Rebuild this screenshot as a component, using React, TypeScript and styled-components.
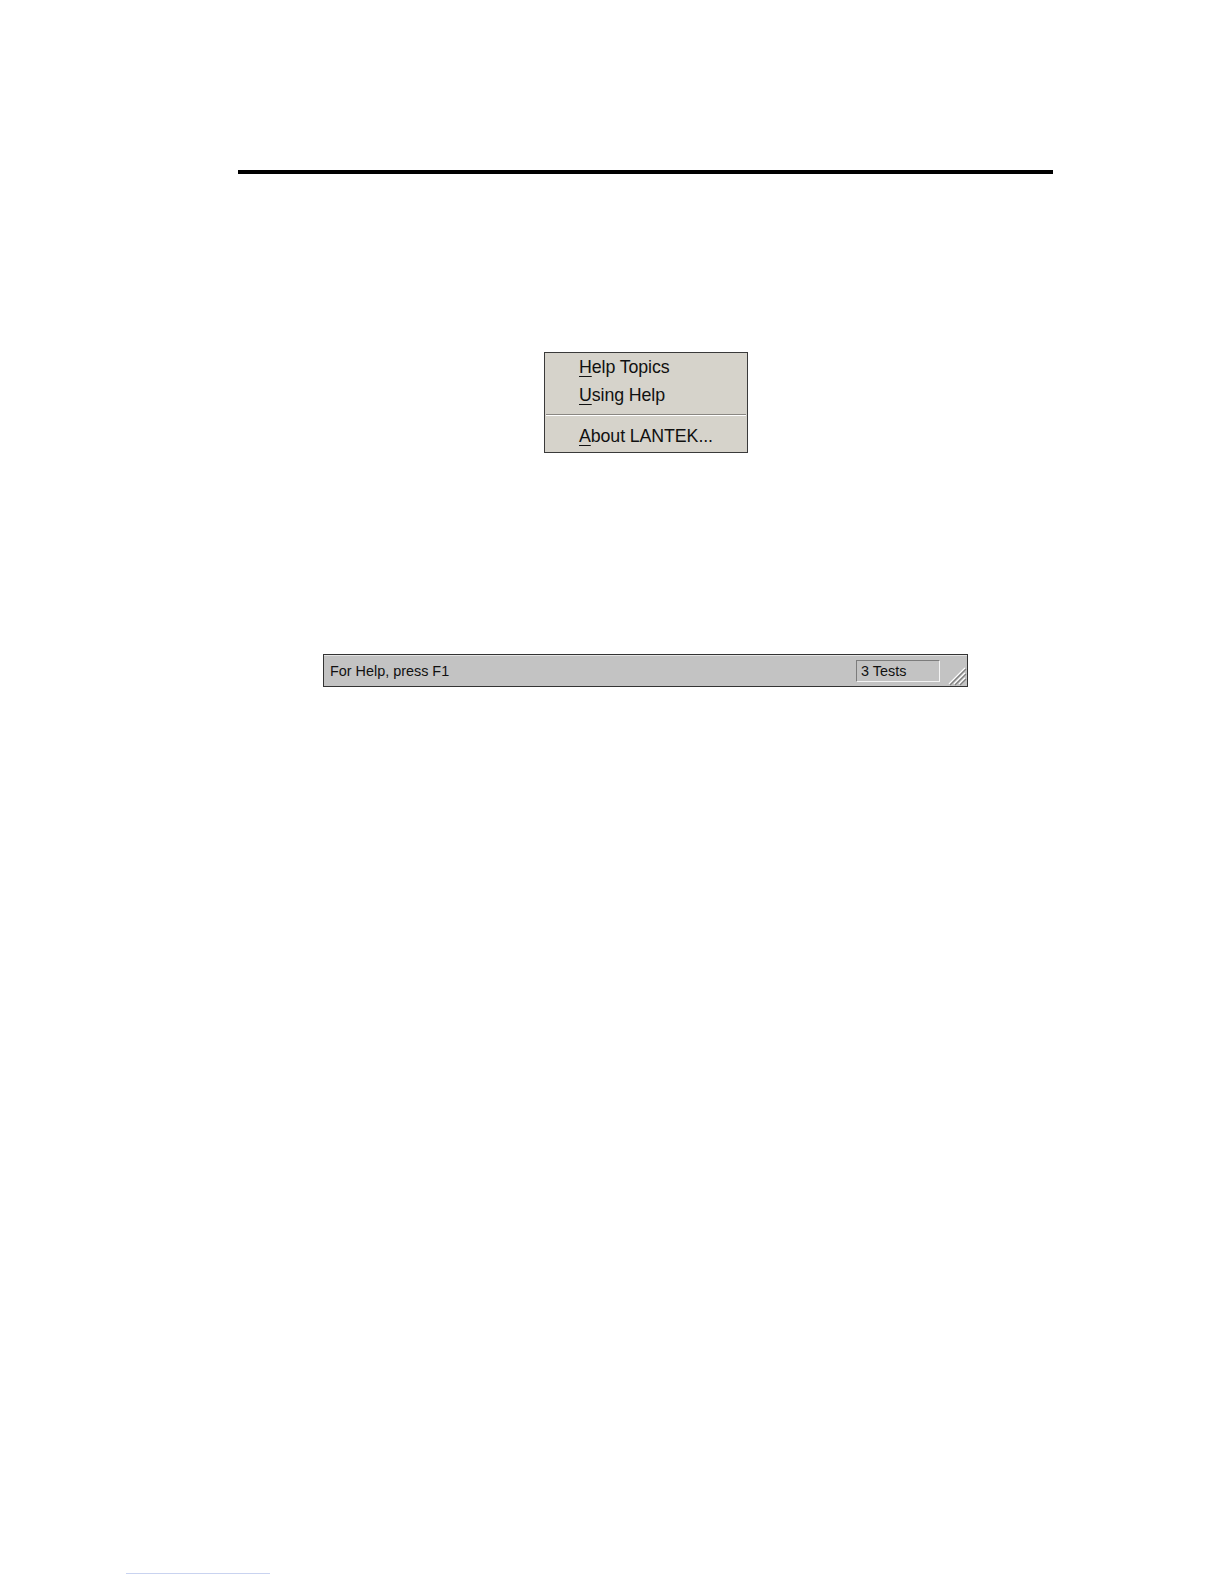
import React from "react";
import styled, { createGlobalStyle } from "styled-components";

const Global = createGlobalStyle`
  html, body { margin: 0; padding: 0; background: #ffffff; }
  body { font-family: "Liberation Sans", Arial, sans-serif; }
`;

const Page = styled.div`
  width: 1224px;
  height: 1584px;
  display: flex;
  flex-direction: column;
  align-items: flex-start;
  overflow: hidden;
`;

const Rule = styled.div`
  margin-top: 170px;
  margin-left: 238px;
  width: 815px;
  height: 4px;
  background: #000;
`;

const Menu = styled.div`
  margin-top: 178px;
  margin-left: 544px;
  width: 202px;
  border: 1px solid #3a3a3a;
  background: #d6d3cb;
  display: flex;
  flex-direction: column;
`;

const MenuItem = styled.div<{ $h: number }>`
  height: ${(p) => p.$h}px;
  display: flex;
  align-items: center;
  padding-left: 34px;
  font-size: 17.8px;
  color: #111;
  letter-spacing: -0.1px;
  u { text-decoration-thickness: 1px; text-underline-offset: 3px; }
`;

const Separator = styled.div`
  height: 12px;
  display: flex;
  flex-direction: column;
  justify-content: center;
  &::before {
    content: "";
    display: block;
    height: 1px;
    margin: 0 1px;
    background: #8a8782;
  }
  &::after {
    content: "";
    display: block;
    height: 1px;
    margin: 0 1px;
    background: #ffffff;
  }
`;

const StatusBar = styled.div`
  margin-top: 201px;
  margin-left: 323px;
  width: 643px;
  height: 31px;
  border: 1px solid #333;
  background: #c3c3c3;
  display: flex;
  align-items: center;
  box-shadow: inset 0 1px 0 #e4e4e4;
`;

const StatusText = styled.div`
  flex: 1;
  padding-left: 6px;
  font-size: 14.4px;
  color: #111;
`;

const Pane = styled.div`
  width: 78px;
  height: 20px;
  margin-right: 5px;
  border-top: 1px solid #7c7c7c;
  border-left: 1px solid #7c7c7c;
  border-bottom: 1px solid #f4f4f4;
  border-right: 1px solid #f4f4f4;
  display: flex;
  align-items: center;
  padding-left: 4px;
  font-size: 14.4px;
  color: #111;
`;

const Grip = styled.svg`
  width: 22px;
  height: 29px;
  align-self: flex-end;
`;

const Footnote = styled.div`
  margin-top: 886px;
  margin-left: 126px;
  width: 144px;
  height: 1px;
  background: #c9d3f0;
`;

export default function App() {
  return (
    <>
      <Global />
      <Page>
        <Rule />
        <Menu>
          <MenuItem $h={28}>
            <span><u>H</u>elp Topics</span>
          </MenuItem>
          <MenuItem $h={28}>
            <span><u>U</u>sing Help</span>
          </MenuItem>
          <Separator />
          <MenuItem $h={31}>
            <span><u>A</u>bout LANTEK...</span>
          </MenuItem>
        </Menu>
        <StatusBar>
          <StatusText>For Help, press F1</StatusText>
          <Pane>3 Tests</Pane>
          <Grip viewBox="0 0 22 29">
            <g strokeWidth="1.2">
              <line x1="20" y1="11" x2="4" y2="27" stroke="#ffffff" />
              <line x1="21" y1="12" x2="5" y2="28" stroke="#808080" />
              <line x1="20" y1="16" x2="9" y2="27" stroke="#ffffff" />
              <line x1="21" y1="17" x2="10" y2="28" stroke="#808080" />
              <line x1="20" y1="21" x2="14" y2="27" stroke="#ffffff" />
              <line x1="21" y1="22" x2="15" y2="28" stroke="#808080" />
            </g>
          </Grip>
        </StatusBar>
        <Footnote />
      </Page>
    </>
  );
}
